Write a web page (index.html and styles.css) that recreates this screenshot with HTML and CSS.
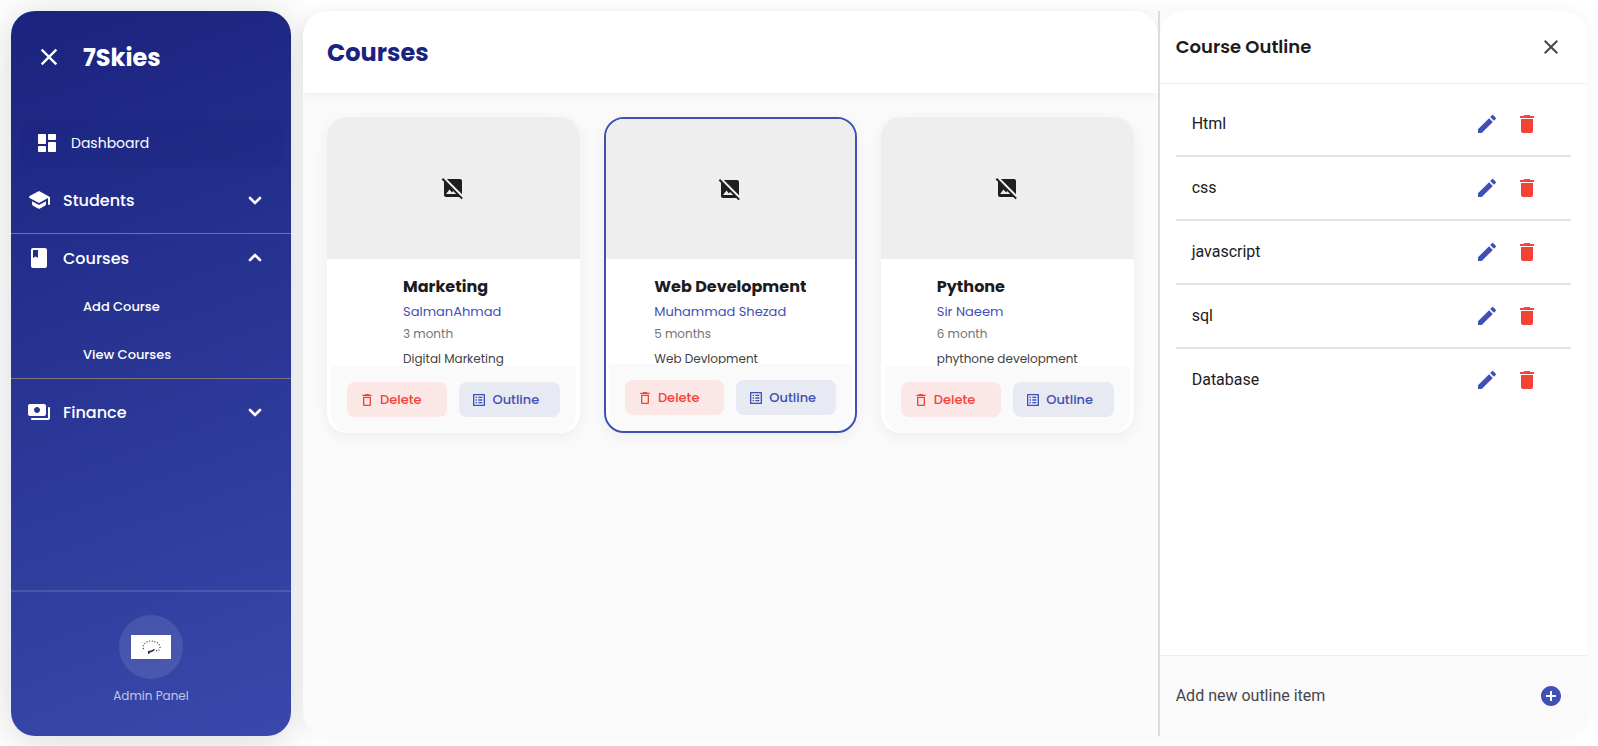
FILE: index.html
```html
<!DOCTYPE html>
<html lang="en">
<head>
<meta charset="utf-8">
<meta name="viewport" content="width=device-width, initial-scale=1">
<title>7Skies – Courses</title>
<link rel="stylesheet" href="styles.css">
</head>
<body>
<svg class="sprite" aria-hidden="true">
  <symbol id="close" viewBox="0 0 24 24"><path d="M19 6.41 17.59 5 12 10.59 6.41 5 5 6.41 10.59 12 5 17.59 6.41 19 12 13.41 17.59 19 19 17.59 13.41 12z"/></symbol>
  <symbol id="dashboard" viewBox="0 0 24 24"><path d="M4 13h6c.55 0 1-.45 1-1V4c0-.55-.45-1-1-1H4c-.55 0-1 .45-1 1v8c0 .55.45 1 1 1zm0 8h6c.55 0 1-.45 1-1v-4c0-.55-.45-1-1-1H4c-.55 0-1 .45-1 1v4c0 .55.45 1 1 1zm10 0h6c.55 0 1-.45 1-1v-8c0-.55-.45-1-1-1h-6c-.55 0-1 .45-1 1v8c0 .55.45 1 1 1zM13 4v4c0 .55.45 1 1 1h6c.55 0 1-.45 1-1V4c0-.55-.45-1-1-1h-6c-.55 0-1 .45-1 1z"/></symbol>
  <symbol id="school" viewBox="0 0 24 24"><path d="M5 13.18v2.81c0 .73.4 1.41 1.04 1.76l5 2.73c.6.33 1.32.33 1.92 0l5-2.73c.64-.35 1.04-1.03 1.04-1.76v-2.81l-6.04 3.3c-.6.33-1.32.33-1.92 0L5 13.18zm6.04-9.66-8.43 4.6c-.69.38-.69 1.38 0 1.76l8.43 4.6c.6.33 1.32.33 1.92 0L21 10.09V16c0 .55.45 1 1 1s1-.45 1-1V9.59c0-.37-.2-.7-.52-.88l-9.52-5.19c-.6-.32-1.32-.32-1.92 0z"/></symbol>
  <symbol id="book" viewBox="0 0 24 24"><path d="M18 2H6c-1.100 0-2 .9-2 2v16c0 1.100.9 2 2 2h12c1.100 0 2-.9 2-2V4c0-1.100-.9-2-2-2zM6 4h5v8l-2.500-1.500L6 12V4z"/></symbol>
  <symbol id="payments" viewBox="0 0 24 24"><path d="M19 14V6c0-1.100-.9-2-2-2H3c-1.100 0-2 .9-2 2v8c0 1.100.9 2 2 2h14c1.100 0 2-.9 2-2zm-9-1c-1.660 0-3-1.340-3-3s1.340-3 3-3 3 1.340 3 3-1.340 3-3 3zm13-6v11c0 1.100-.9 2-2 2H5c-.55 0-1-.45-1-1s.45-1 1-1h16V8c0-.55.45-1 1-1s1 .45 1 1z"/></symbol>
  <symbol id="down" viewBox="0 0 24 24"><path d="m7 10 5 5 5-5" fill="none" stroke="currentColor" stroke-width="2.600" stroke-linecap="round"/></symbol>
  <symbol id="up" viewBox="0 0 24 24"><path d="m7 14 5-5 5 5" fill="none" stroke="currentColor" stroke-width="2.600" stroke-linecap="round"/></symbol>
  <symbol id="no-image" viewBox="0 0 24 24"><path d="m21.900 21.900-8.490-8.490L3.590 3.590 2.100 2.100.69 3.510 3 5.830V19c0 1.100.9 2 2 2h13.170l2.310 2.310 1.420-1.410zM5 18l3.500-4.500 2.500 3.010L12.170 15l3 3H5zm16 .17L5.830 3H19c1.100 0 2 .9 2 2v13.170z"/></symbol>
  <symbol id="trash-line" viewBox="0 0 24 24"><path d="M6 19c0 1.100.9 2 2 2h8c1.100 0 2-.9 2-2V7H6v12zM8 9h8v10H8V9zm7.500-5-1-1h-5l-1 1H5v2h14V4h-3.500z"/></symbol>
  <symbol id="list" viewBox="0 0 24 24"><path d="M11 7h6v2h-6zm0 4h6v2h-6zm0 4h6v2h-6zM7 7h2v2H7zm0 4h2v2H7zm0 4h2v2H7zM20.100 3H3.900c-.5 0-.9.4-.9.9v16.200c0 .4.4.9.9.9h16.200c.4 0 .9-.5.9-.9V3.900c0-.5-.5-.9-.9-.9zM19 19H5V5h14v14z"/></symbol>
  <symbol id="pencil" viewBox="0 0 24 24"><path d="M3 17.250V21h3.750L17.810 9.940l-3.750-3.750L3 17.250zM20.710 7.040c.39-.39.39-1.020 0-1.410l-2.340-2.340c-.39-.39-1.020-.39-1.410 0l-1.830 1.830 3.750 3.750 1.830-1.830z"/></symbol>
  <symbol id="trash" viewBox="0 0 24 24"><path d="M6 19c0 1.100.9 2 2 2h8c1.100 0 2-.9 2-2V7H6v12zM19 4h-3.500l-1-1h-5l-1 1H5v2h14V4z"/></symbol>
  <symbol id="add" viewBox="0 0 24 24"><path d="M12 2C6.480 2 2 6.480 2 12s4.480 10 10 10 10-4.480 10-10S17.520 2 12 2zm5 11h-4v4h-2v-4H7v-2h4V7h2v4h4v2z"/></symbol>
</svg>

<div class="app">
  <aside class="sidebar">
    <div class="brand">
      <button class="icon-btn" aria-label="Close menu"><svg class="icon icon-lg"><use href="#close"/></svg></button>
      <span class="brand-name">7Skies</span>
    </div>
    <nav class="nav">
      <a class="nav-home" href="#"><svg class="icon"><use href="#dashboard"/></svg>Dashboard</a>
      <div class="group">
        <button class="group-head"><svg class="icon"><use href="#school"/></svg><span class="group-name">Students</span><svg class="icon"><use href="#down"/></svg></button>
      </div>
      <div class="group group-open">
        <button class="group-head" aria-expanded="true"><svg class="icon"><use href="#book"/></svg><span class="group-name">Courses</span><svg class="icon"><use href="#up"/></svg></button>
        <a class="sub" href="#">Add Course</a>
        <a class="sub" href="#">View Courses</a>
      </div>
      <div class="group">
        <button class="group-head"><svg class="icon"><use href="#payments"/></svg><span class="group-name">Finance</span><svg class="icon"><use href="#down"/></svg></button>
      </div>
    </nav>
    <footer class="profile">
      <div class="avatar">
        <svg class="logo" viewBox="0 0 40 24" role="img" aria-label="7Skies logo">
          <rect width="40" height="24" fill="#fff"/>
          <path d="M12.500 14C11 9 16 6 20 6s9 2 9 7c0 2-2 3-5 2.500" fill="none" stroke="#39417c" stroke-width="1.300" stroke-dasharray="1 1.700"/>
          <path d="M17 16l3-.5 3-1.500 1 1-3 2-2 .5-1 1.500h-1z" fill="#262c66"/>
        </svg>
      </div>
      <span class="role">Admin Panel</span>
    </footer>
  </aside>

  <div class="workspace">
    <main class="main">
      <header class="main-head"><h1 class="page-title">Courses</h1></header>
      <div class="cards">
        <article class="card">
          <div class="cover"><svg class="icon"><use href="#no-image"/></svg></div>
          <div class="info">
            <h2 class="course">Marketing</h2>
            <p class="teacher">SalmanAhmad</p>
            <p class="length">3 month</p>
            <p class="about">Digital Marketing</p>
          </div>
          <div class="actions">
            <button class="btn btn-delete"><svg class="icon icon-xs"><use href="#trash-line"/></svg>Delete</button>
            <button class="btn btn-outline"><svg class="icon icon-xs"><use href="#list"/></svg>Outline</button>
          </div>
        </article>
        <article class="card card-selected">
          <div class="cover"><svg class="icon"><use href="#no-image"/></svg></div>
          <div class="info">
            <h2 class="course">Web Development</h2>
            <p class="teacher">Muhammad Shezad</p>
            <p class="length">5 months</p>
            <p class="about">Web Devlopment</p>
          </div>
          <div class="actions">
            <button class="btn btn-delete"><svg class="icon icon-xs"><use href="#trash-line"/></svg>Delete</button>
            <button class="btn btn-outline"><svg class="icon icon-xs"><use href="#list"/></svg>Outline</button>
          </div>
        </article>
        <article class="card">
          <div class="cover"><svg class="icon"><use href="#no-image"/></svg></div>
          <div class="info">
            <h2 class="course">Pythone</h2>
            <p class="teacher">Sir Naeem</p>
            <p class="length">6 month</p>
            <p class="about">phythone development</p>
          </div>
          <div class="actions">
            <button class="btn btn-delete"><svg class="icon icon-xs"><use href="#trash-line"/></svg>Delete</button>
            <button class="btn btn-outline"><svg class="icon icon-xs"><use href="#list"/></svg>Outline</button>
          </div>
        </article>
      </div>
    </main>

    <div class="side">
      <section class="outline">
        <header class="outline-head">
          <h2 class="outline-title">Course Outline</h2>
          <button class="icon-btn" aria-label="Close outline"><svg class="icon"><use href="#close"/></svg></button>
        </header>
        <ul class="items">
          <li class="item"><span class="item-name">Html</span><button class="icon-btn edit" aria-label="Edit Html"><svg class="icon"><use href="#pencil"/></svg></button><button class="icon-btn remove" aria-label="Delete Html"><svg class="icon"><use href="#trash"/></svg></button></li>
          <li class="item"><span class="item-name">css</span><button class="icon-btn edit" aria-label="Edit css"><svg class="icon"><use href="#pencil"/></svg></button><button class="icon-btn remove" aria-label="Delete css"><svg class="icon"><use href="#trash"/></svg></button></li>
          <li class="item"><span class="item-name">javascript</span><button class="icon-btn edit" aria-label="Edit javascript"><svg class="icon"><use href="#pencil"/></svg></button><button class="icon-btn remove" aria-label="Delete javascript"><svg class="icon"><use href="#trash"/></svg></button></li>
          <li class="item"><span class="item-name">sql</span><button class="icon-btn edit" aria-label="Edit sql"><svg class="icon"><use href="#pencil"/></svg></button><button class="icon-btn remove" aria-label="Delete sql"><svg class="icon"><use href="#trash"/></svg></button></li>
          <li class="item"><span class="item-name">Database</span><button class="icon-btn edit" aria-label="Edit Database"><svg class="icon"><use href="#pencil"/></svg></button><button class="icon-btn remove" aria-label="Delete Database"><svg class="icon"><use href="#trash"/></svg></button></li>
        </ul>
        <form class="add">
          <input class="add-input" type="text" aria-label="Add new outline item" placeholder="Add new outline item">
          <button class="icon-btn edit" type="button" aria-label="Add item"><svg class="icon"><use href="#add"/></svg></button>
        </form>
      </section>
    </div>
  </div>
</div>
</body>
</html>
```
FILE: styles.css
```css
* { box-sizing: border-box; }

body {
  margin: 0;
  background: #fff;
  color: #1d1b20;
  font-family: Poppins, Inter, sans-serif;
}

h1, h2, p, ul { margin: 0; padding: 0; }
ul { list-style: none; }
a { color: inherit; text-decoration: none; }
button { border: 0; background: none; color: inherit; font: inherit; cursor: pointer; }

.sprite { display: none; }

.icon { width: 24px; height: 24px; flex: none; fill: currentColor; display: block; }
.icon-xs { width: 16px; height: 16px; }
.icon-lg { width: 28px; height: 28px; }

.icon-btn {
  width: 40px;
  height: 40px;
  padding: 0;
  display: flex;
  align-items: center;
  justify-content: center;
}

.app {
  min-height: 100vh;
  padding: 11px 11px 10px;
  display: flex;
  gap: 12px;
}

/* Sidebar */
.sidebar {
  width: 280px;
  flex: none;
  display: flex;
  flex-direction: column;
  border-radius: 24px;
  background: linear-gradient(160deg, #1a237e, #3949ab);
  box-shadow: 0 4px 40px rgba(0, 0, 0, 0.16);
  color: #fff;
}
.brand { display: flex; align-items: center; gap: 14px; padding: 26px 18px 0; }
.brand-name { padding-top: 2px; font-size: 24px; line-height: 36px; font-weight: 700; }
.nav { padding-top: 42px; flex: 1; }
.nav-home {
  margin: 0 8px 0 9px;
  height: 48px;
  padding: 0 15px;
  display: flex;
  align-items: center;
  gap: 12px;
  border-radius: 12px;
  background: rgba(26, 35, 126, 0.2);
  font-size: 14px;
}
.group { padding: 9px 0; }
.group-open {
  padding: 0;
  border-top: 1px solid #79747e;
  border-bottom: 1px solid #79747e;
}
.group-head {
  width: 100%;
  height: 48px;
  padding: 0 24px 0 16px;
  display: flex;
  align-items: center;
  gap: 12px;
  font-size: 16px;
  font-weight: 500;
  text-align: left;
}
.group-name { flex: 1; }
.sub {
  height: 48px;
  padding: 2px 0 0 72px;
  display: flex;
  align-items: center;
  font-size: 13px;
  font-weight: 500;
}
.profile {
  padding: 23px 16px 30px;
  display: flex;
  flex-direction: column;
  align-items: center;
  gap: 7px;
  border-top: 2px solid rgba(255, 255, 255, 0.12);
}
.avatar {
  width: 64px;
  height: 64px;
  display: flex;
  align-items: center;
  justify-content: center;
  border-radius: 50%;
  background: rgba(255, 255, 255, 0.1);
}
.logo { width: 40px; height: 24px; }
.role { font-size: 12px; line-height: 20px; color: rgba(255, 255, 255, 0.7); }

/* Workspace */
.workspace {
  flex: 1;
  min-width: 0;
  display: flex;
  border-radius: 24px;
  background: #fafafa;
  box-shadow: 0 0 20px rgba(0, 0, 0, 0.05);
}
.main { flex: 2; min-width: 0; }
.main-head {
  height: 82px;
  padding: 2px 24px 0;
  display: flex;
  align-items: center;
  border-radius: 24px 24px 0 0;
  background: #fff;
  box-shadow: 0 2px 10px rgba(0, 0, 0, 0.05);
}
.page-title { font-size: 24px; line-height: 36px; font-weight: 700; color: #1a237e; }

.cards {
  padding: 24px;
  display: grid;
  grid-template-columns: repeat(3, minmax(0, 1fr));
  gap: 24px;
}
.card {
  aspect-ratio: 4 / 5;
  min-width: 0;
  display: flex;
  flex-direction: column;
  overflow: hidden;
  border-radius: 20px;
  background: #fff;
  box-shadow: 0 4px 15px rgba(0, 0, 0, 0.05);
}
.card-selected { border: 2px solid #3f51b5; }
.cover {
  flex: 0 0 45%;
  display: flex;
  align-items: center;
  justify-content: center;
  background: #eee;
  color: #1f1f1f;
}
.info { flex: 1; min-height: 0; overflow: hidden; align-self: center; padding-top: 16px; }
.course { font-size: 16px; line-height: 24px; font-weight: 700; }
.teacher { margin-top: 3px; font-size: 13px; line-height: 20px; color: #3f51b5; }
.length { margin-top: 3px; font-size: 12px; line-height: 18px; color: #757575; }
.about { margin-top: 7px; font-size: 12px; line-height: 18px; color: #424242; }
.actions {
  margin: 0 4px;
  padding: 16px;
  display: flex;
  gap: 12px;
  border-radius: 0 0 20px 20px;
  background: #fafafa;
}
.card-selected .actions { margin: 0 3px; }
.btn {
  flex: 1;
  min-width: 0;
  height: 35px;
  padding: 0 12px;
  display: flex;
  align-items: center;
  gap: 5px;
  border-radius: 8px;
  font-size: 13px;
  font-weight: 500;
}
.btn-delete { background: #fae7e6; color: #f44336; }
.btn-outline { background: #e7e9f3; color: #3f51b5; }

/* Outline panel */
.side {
  flex: 1;
  min-width: 0;
  display: flex;
  border-left: 2px solid #dcdae3;
}
.outline {
  flex: 1;
  min-width: 0;
  display: flex;
  flex-direction: column;
  overflow: hidden;
  border-radius: 24px;
  background: #fff;
}
.outline-head {
  height: 73px;
  padding: 0 16px;
  display: flex;
  align-items: center;
  justify-content: space-between;
  border-bottom: 1px solid #eee;
}
.outline-title { font-size: 18px; line-height: 28px; font-weight: 600; }
.outline-head .icon-btn { color: #49454f; }
.items { flex: 1; padding: 9px 16px; }
.item {
  height: 64px;
  padding: 0 24px 0 16px;
  display: flex;
  align-items: center;
  border-bottom: 2px solid #e3e2e8;
  font-family: Roboto, sans-serif;
  font-size: 16px;
}
.item:last-child { border-bottom-color: transparent; }
.item-name { flex: 1; padding-bottom: 2px; }
.edit { color: #3f51b5; }
.remove { color: #f44336; }
.add {
  height: 81px;
  padding: 0 16px;
  display: flex;
  align-items: center;
  border-top: 1px solid #eee;
  background: #fafafa;
}
.add-input {
  flex: 1;
  min-width: 0;
  padding: 0;
  border: 0;
  outline: 0;
  background: none;
  color: #49454f;
  font: 16px/24px Roboto, sans-serif;
}
.add-input::placeholder { color: #49454f; opacity: 1; }
```
